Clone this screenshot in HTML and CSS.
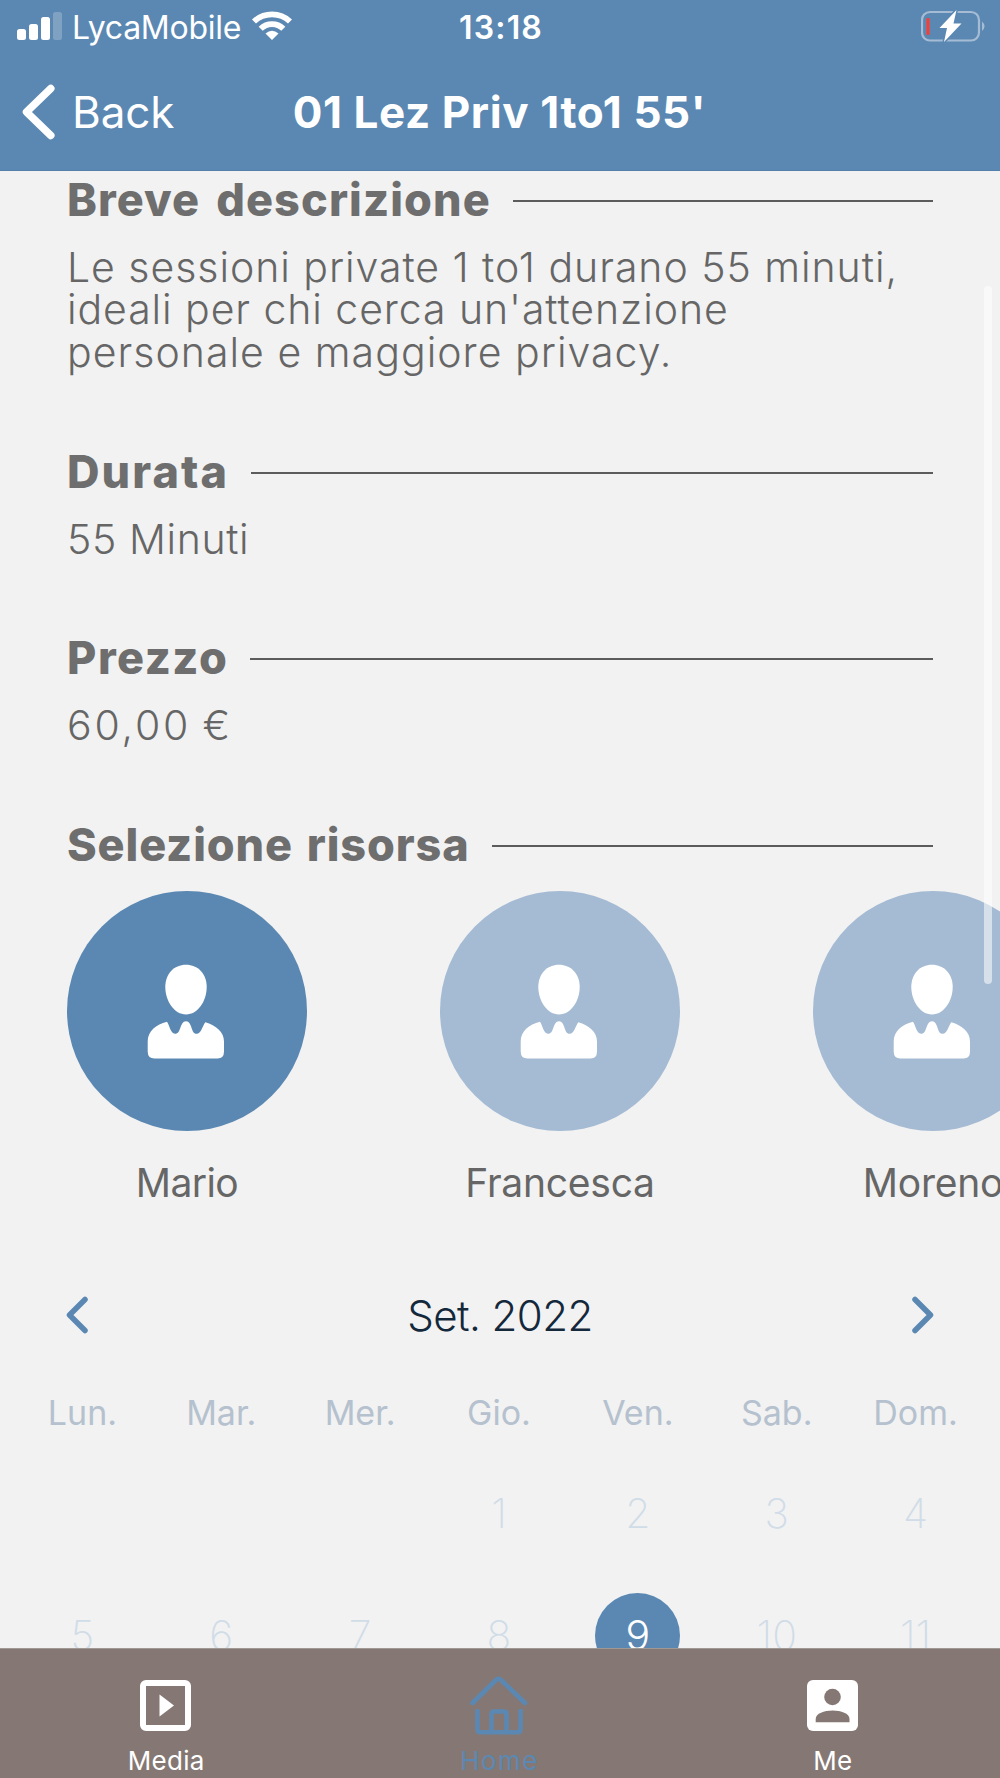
FILE: index.html
```html
<!DOCTYPE html>
<html lang="it">
<head>
<meta charset="utf-8">
<title>01 Lez Priv 1to1 55'</title>
<link rel="stylesheet" href="styles.css">
</head>
<body>
<svg class="defs" aria-hidden="true">
  <symbol id="person" viewBox="0 0 240 240">
    <path d="M119 73.800c12 0 20.700 9.200 20.700 22 0 14.500-9 27.700-20.700 27.700s-20.700-13.200-20.700-27.700c0-12.800 8.700-22 20.700-22z"/>
    <path d="M100 130.800C102.500 134 103.500 142.800 108 142.800C114.500 142.800 112.500 130.200 119 130.200C125.500 130.200 123.500 142.800 129.700 142.800C134 142.800 135.500 135 138.300 131.200C149 134.500 157 140.500 157 150.500V160.500Q157 167.500 150.500 167.500H87.500Q80.700 167.500 80.700 160.500V150.500C80.700 140.500 89 133.500 100 130.800z"/>
  </symbol>
</svg>
<div class="screen">
  <header class="top">
    <div class="status">
      <div class="carrier">
        <svg width="46" height="30" viewBox="0 0 46 30" fill="#fff">
          <rect x="0" y="18" width="9" height="11" rx="2.500"/>
          <rect x="12" y="13" width="9" height="16" rx="2.500"/>
          <rect x="24" y="6" width="9" height="23" rx="2.500"/>
          <rect x="36" y="1" width="9" height="28" rx="2.500" opacity=".22"/>
        </svg>
        <span class="carrier-name">LycaMobile</span>
        <svg class="wifi" width="40" height="30" viewBox="0 0 40 30" fill="none" stroke="#fff" stroke-width="5.800">
          <path d="M2 10.500C12 1 28 1 38 10.500"/>
          <path d="M8.700 17.800C15 11.600 25 11.600 31.300 17.800"/>
          <path d="M13.500 22.500Q20 17 26.500 22.500L20 29z" fill="#fff" stroke="none"/>
        </svg>
      </div>
      <span class="time">13:18</span>
      <svg class="battery" width="64" height="32" viewBox="0 0 64 32">
        <rect x="1" y="2" width="57" height="28.500" rx="8" fill="none" stroke="#a5bcd4" stroke-width="2.200"/>
        <path d="M61 11.500Q66 16 61 21z" fill="#a5bcd4"/>
        <rect x="5.500" y="8" width="3" height="17" rx="1" fill="#ff3b30"/>
        <path d="M35.500 0L18.500 18H26L23 32L40.500 13.500H32.500z" fill="#fff" stroke="#5b88b2" stroke-width="3" stroke-linejoin="round" paint-order="stroke"/>
      </svg>
    </div>
    <nav class="bar">
      <div class="back">
        <svg width="33" height="56" viewBox="0 0 33 56" fill="none" stroke="#fff" stroke-width="7.500" stroke-linecap="round" stroke-linejoin="round"><path d="M28.800 4.500L4.500 28L28.800 51.500"/></svg>
        <span>Back</span>
      </div>
      <h1>01 Lez Priv 1to1 55'</h1>
    </nav>
  </header>

  <main class="content">
    <section>
      <h2 class="w-breve">Breve descrizione</h2>
      <p>Le sessioni private 1 to1 durano 55 minuti,<br><span class="l2">ideali per chi cerca un'attenzione</span><br><span class="l3">personale e maggiore privacy.</span></p>
    </section>
    <section>
      <h2 class="w-durata">Durata</h2>
      <p class="minutes">55 Minuti</p>
    </section>
    <section>
      <h2 class="w-prezzo">Prezzo</h2>
      <p class="price">60,00 €</p>
    </section>
    <section class="resources">
      <h2 class="w-risorsa">Selezione risorsa</h2>
      <div class="people">
        <div class="person selected"><svg><use href="#person"/></svg><span class="mario">Mario</span></div>
        <div class="person"><svg><use href="#person"/></svg><span>Francesca</span></div>
        <div class="person"><svg><use href="#person"/></svg><span>Moreno</span></div>
      </div>
    </section>

    <div class="month">
      <svg width="23" height="38" viewBox="0 0 23 38"><path d="M19 3.500L3.500 19L19 34.500"/></svg>
      <span>Set. 2022</span>
      <svg width="23" height="38" viewBox="0 0 23 38"><path d="M4 3.500L19.500 19L4 34.500"/></svg>
    </div>
    <div class="weekdays"><span>Lun.</span><span>Mar.</span><span>Mer.</span><span>Gio.</span><span>Ven.</span><span>Sab.</span><span>Dom.</span></div>
    <div class="days">
      <span></span><span></span><span></span><span>1</span><span>2</span><span>3</span><span>4</span>
      <span>5</span><span>6</span><span>7</span><span>8</span><span class="today">9</span><span>10</span><span>11</span>
    </div>
    <div class="scrollbar"></div>
  </main>

  <footer class="tabs">
    <div class="tab">
      <svg width="60" height="60" viewBox="0 0 60 60"><rect x="7" y="7" width="45" height="45" rx="3" fill="none" stroke="#fff" stroke-width="6"/><path d="M23.500 18.500L38 29.500L23.500 40.500z" fill="#fff"/></svg>
      <span>Media</span>
    </div>
    <div class="tab active">
      <svg width="60" height="60" viewBox="0 0 60 60" fill="none" stroke="#5b88b2" stroke-width="4.600" stroke-linecap="round" stroke-linejoin="round"><path d="M3.500 27L27.500 3.500Q29.500 2 31.500 3.500L56 27M8.500 35V53.500Q8.500 56.200 11.500 56.200H48.500Q51.500 56.200 51.500 53.500V35M22.500 56V38Q22.500 35.500 25.500 35.500H34.500Q37.500 35.500 37.500 38V56"/></svg>
      <span>Home</span>
    </div>
    <div class="tab">
      <svg width="60" height="60" viewBox="0 0 60 60"><rect x="4" y="4" width="51" height="51" rx="6" fill="#fff"/><circle cx="29.500" cy="21" r="8.300" fill="#857874"/><path d="M12.700 46.200V43C12.700 31.500 46.500 31.500 46.500 43V46.200z" fill="#857874"/></svg>
      <span>Me</span>
    </div>
  </footer>
</div>
</body>
</html>
```
FILE: styles.css
```css
* { box-sizing: border-box; }
body { margin: 0; font-family: Inter, "Liberation Sans", sans-serif; }
svg { display: block; flex: none; }
h1, h2, p { margin: 0; }
.defs { display: none; }

.screen {
  width: 1000px;
  height: 1778px;
  display: flex;
  flex-direction: column;
  overflow: hidden;
  background: #f2f2f2;
  white-space: nowrap;
}

.top {
  height: 171px;
  flex: none;
  background: #5b88b2;
  border-bottom: 1px solid #5580ab;
  color: #fff;
}
.status {
  height: 56px;
  display: grid;
  grid-template-columns: 1fr auto 1fr;
  align-items: center;
  padding: 0 15px 0 17px;
}
.carrier { display: flex; align-items: center; }
.carrier svg { margin-top: -4px; }
.carrier-name { font-size: 32px; letter-spacing: -0.25px; margin-left: 9px; line-height: 54px; }
.carrier .wifi { margin-left: 11px; }
.time { font-size: 32px; font-weight: 600; letter-spacing: 1.2px; line-height: 54px; }
.battery { justify-self: end; margin-top: -4px; }

.bar {
  height: 114px;
  display: grid;
  grid-template-columns: 1fr auto 1fr;
  align-items: center;
  padding: 0 23px 2px 22px;
}
.back { display: flex; align-items: center; gap: 17px; font-size: 44px; letter-spacing: -0.1px; }
h1 { font-size: 44px; font-weight: 700; letter-spacing: 0.6px; }

.content { position: relative; flex: 1; min-height: 0; overflow: hidden; }
section { padding: 0 67px; margin-bottom: 69.5px; }
h2 {
  display: flex;
  align-items: center;
  height: 56px;
  margin-bottom: 18.5px;
  font-size: 45px;
  font-weight: 800;
  color: #6e6e6e;
}
h2::after { content: ""; flex: 1; height: 2px; margin: 3px 0 0 22px; background: #5c5c5c; }
.w-breve { letter-spacing: 1.1px; word-spacing: 5px; }
.w-durata { letter-spacing: 2.1px; }
.w-prezzo { letter-spacing: 1.55px; }
.w-risorsa { letter-spacing: 0.9px; word-spacing: 3px; }
p { font-size: 41px; font-weight: 300; line-height: 42.67px; letter-spacing: 0.96px; color: #666; }
.l2 { letter-spacing: 0.92px; }
.l3 { letter-spacing: 1.03px; }
.minutes { letter-spacing: 0.6px; }
.price { letter-spacing: 2.8px; word-spacing: -3px; }

.resources { margin-bottom: 83px; }
.resources h2 { margin-bottom: 19px; }
.people { display: flex; gap: 133px; }
.person { width: 240px; flex: none; display: flex; flex-direction: column; align-items: center; gap: 28px; font-size: 39px; line-height: 48px; letter-spacing: -0.25px; color: #666; }
.person svg { width: 240px; height: 240px; border-radius: 50%; background: #a5bbd3; fill: #fff; }
.selected svg { background: #5b88b2; }
.person .mario { letter-spacing: -0.6px; }

.month { display: flex; align-items: center; justify-content: space-between; height: 50px; padding: 0 66px; font-size: 42px; font-weight: 300; letter-spacing: -0.55px; color: #14283c; }
.month svg { fill: none; stroke: #5b88b2; stroke-width: 5.5; stroke-linecap: round; stroke-linejoin: round; }
.weekdays, .days { display: grid; grid-template-columns: repeat(7, 1fr); padding: 0 15px 0 13px; justify-items: center; }
.weekdays { margin-top: 53px; font-size: 34px; line-height: 40px; color: #b5c1ce; }
.days { margin-top: 38px; row-gap: 37px; grid-auto-rows: 85px; font-size: 41px; font-weight: 200; line-height: 84px; color: #d0dce7; }
.days .today { width: 85px; border-radius: 50%; background: #5b88b2; color: #fff; text-align: center; font-weight: 300; }

.scrollbar { position: absolute; right: 8px; top: 115px; width: 8px; height: 698px; border-radius: 4px; background: rgba(255, 255, 255, 0.55); }

.tabs { height: 130px; flex: none; display: grid; grid-template-columns: repeat(3, 1fr); background: #857874; border-top: 1px solid #a09894; }
.tab { display: flex; flex-direction: column; align-items: center; padding: 27px 1px 0 0; font-size: 26px; line-height: 32px; color: #fff; letter-spacing: 0.3px; }
.tab span { margin-top: 9px; }
.tab.active { color: #5b88b2; letter-spacing: 1.4px; }
```
